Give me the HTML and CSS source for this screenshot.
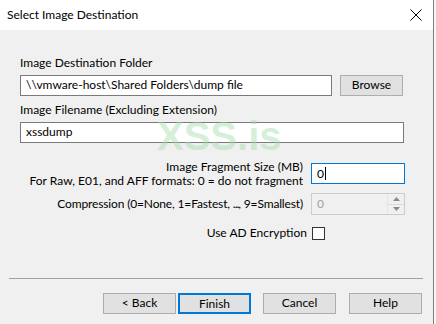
FILE: index.html
```html
<!DOCTYPE html>
<html>
<head>
<meta charset="utf-8">
<link rel="stylesheet" href="styles.css">
</head>
<body>
<div class="window">
  <div class="titlebar">
    <span class="title">Select Image Destination</span>
    <svg class="close" width="12" height="12" viewBox="0 0 12 12"><path d="M0.5 0.5L11.5 11.5M11.5 0.5L0.5 11.5" stroke="#000" stroke-width="1"/></svg>
  </div>
  <div class="content">
    <div class="label">Image Destination Folder</div>
    <div class="row">
      <div class="input w1">\\vmware-host\Shared Folders\dump file</div>
      <div class="btn browse">Browse</div>
    </div>
    <div class="label l2">Image Filename (Excluding Extension)</div>
    <div class="input w2">xssdump</div>
    <div class="opt frag">
      <div class="olabel two">Image Fragment Size (MB)<br>For Raw, E01, and AFF formats: 0 = do not fragment</div>
      <div class="input ctl focus"><span>0</span><span class="caret"></span></div>
    </div>
    <div class="opt comp">
      <div class="olabel">Compression (0=None, 1=Fastest, <span class="dots">...</span>, 9=Smallest)</div>
      <div class="spin ctl">
        <span class="val">0</span>
        <div class="arrows">
          <div class="arr"><svg width="7" height="4" viewBox="0 0 7 4"><path d="M0 4L3.5 0L7 4Z" fill="#8a8a8a"/></svg></div>
          <div class="arr"><svg width="7" height="4" viewBox="0 0 7 4"><path d="M0 0L3.5 4L7 0Z" fill="#8a8a8a"/></svg></div>
        </div>
      </div>
    </div>
    <div class="opt chk">
      <div class="olabel">Use AD Encryption</div>
      <div class="checkbox"></div>
    </div>
    <div class="sep"></div>
    <div class="buttons">
      <div class="btn b-back">&lt; Back</div>
      <div class="btn b-finish">Finish</div>
      <div class="btn b-cancel">Cancel</div>
      <div class="btn b-help">Help</div>
    </div>
    <div class="watermark">XSS.is</div>
  </div>
</div>
</body>
</html>
```
FILE: styles.css
```css
html, body {
  margin: 0;
  padding: 0;
}
body {
  width: 436px;
  height: 324px;
  overflow: hidden;
  background: #f7f7f7;
  font-family: "Lato", "Noto Sans", sans-serif;
  font-size: 12px;
  color: #000;
}
.window {
  width: 433px;
  height: 324px;
  border-right: 1px solid #7d7d7d;
  display: flex;
  flex-direction: column;
}
.titlebar {
  height: 30px;
  background: #fff;
  display: flex;
  align-items: center;
  justify-content: space-between;
  padding: 0 11px 0 7px;
}
.title {
  line-height: 16px;
}
.close {
  display: block;
}
.content {
  position: relative;
  flex: 1;
  background: #f0f0f0;
  padding: 25px 0 0 20px;
  display: flex;
  flex-direction: column;
}
.label {
  line-height: 15px;
  height: 15px;
}
.l2 {
  margin-top: 6px;
}
.row {
  display: flex;
  margin-top: 5px;
}
.input {
  box-sizing: border-box;
  height: 21px;
  border: 1px solid #7a7a7a;
  background: #fff;
  padding-left: 5px;
  line-height: 18px;
  white-space: nowrap;
  overflow: hidden;
}
.w1 { width: 312px; }
.w2 { width: 384px; margin-top: 5px; }
.btn {
  box-sizing: border-box;
  height: 21px;
  background: #e1e1e1;
  border: 1px solid #adadad;
  text-align: center;
  line-height: 18px;
}
.browse {
  width: 63px;
  margin-left: 8px;
}
.opt {
  display: flex;
  align-items: flex-start;
}
.olabel {
  width: 283px;
  text-align: right;
  line-height: 14px;
  white-space: nowrap;
}
.dots {
  letter-spacing: -1px;
}
.ctl {
  box-sizing: border-box;
  width: 94px;
  margin-left: 8px;
}
.frag {
  margin-top: 17px;
}
.frag .ctl {
  margin-top: 3px;
}
.focus {
  border-color: #0078d7;
  display: flex;
  align-items: center;
}
.caret {
  display: inline-block;
  width: 1px;
  height: 13px;
  background: #000;
  margin-left: 1px;
}
.comp {
  margin-top: 5px;
  align-items: center;
}
.comp .olabel {
  letter-spacing: -0.15px;
}
.spin {
  height: 22px;
  border: 1px solid #cccccc;
  background: #f0f0f0;
  display: flex;
  justify-content: space-between;
}
.val {
  color: #a0a0a0;
  padding-left: 5px;
  line-height: 19px;
}
.arrows {
  width: 16px;
  display: flex;
  flex-direction: column;
  border-left: 1px solid #e6e6e6;
}
.arr {
  flex: 1;
  display: flex;
  align-items: center;
  justify-content: center;
}
.arr + .arr {
  border-top: 1px solid #dcdcdc;
}
.chk {
  margin-top: 11px;
  align-items: center;
}
.chk .olabel {
  width: 287px;
}
.checkbox {
  box-sizing: border-box;
  width: 13px;
  height: 13px;
  border: 1px solid #333;
  background: #fff;
  margin-left: 5px;
}
.sep {
  margin: 38px 0 0 -11px;
  width: 414px;
  height: 1px;
  background: #a0a0a0;
}
.buttons {
  display: flex;
  margin-top: 14px;
  padding-left: 83px;
}
.buttons .btn {
  width: 73px;
}
.b-finish {
  margin-left: 2px;
  border: 2px solid #0078d7;
  line-height: 17px;
}
.b-cancel { margin-left: 12px; }
.b-help { margin-left: 13px; }
.watermark {
  position: absolute;
  left: 157px;
  top: 86px;
  font-family: "Liberation Sans", Arial, sans-serif;
  font-weight: bold;
  font-size: 40px;
  line-height: 40px;
  color: rgba(160, 220, 170, 0.45);
  pointer-events: none;
}
```
